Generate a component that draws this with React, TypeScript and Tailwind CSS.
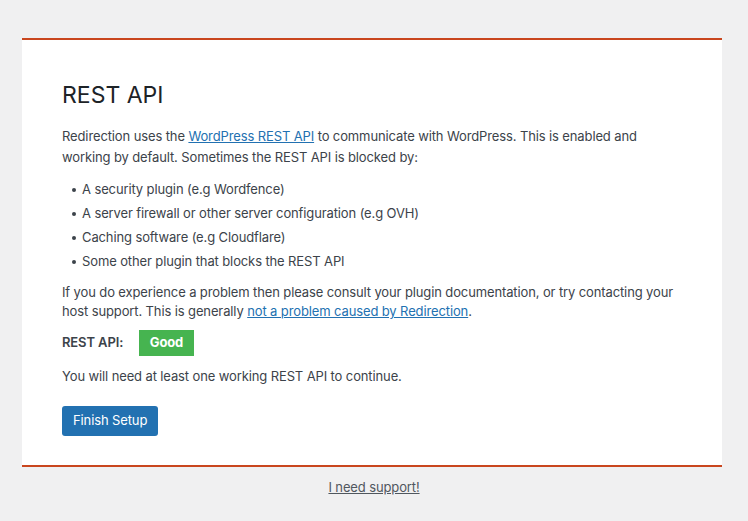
export default function App() {
  return (
    <div
      className="min-h-[521px] bg-[#f0f0f1] pt-[38px] text-[13px] tracking-[-0.12px] text-[#3c434a]"
      style={{ fontFamily: "Inter, 'Liberation Sans', sans-serif" }}
    >
      <div className="mx-[22px] w-[700px] border-t-2 border-b-2 border-[#c9461e] bg-white px-10 pt-[40px] pb-[29px]">
        <h2 className="text-[23px] leading-[30px] tracking-normal text-[#1d2327]">REST API</h2>
        <p className="mt-[16px] leading-[21px]">
          Redirection uses the{" "}
          <a href="#" className="text-[#2271b1] underline">
            WordPress REST API
          </a>{" "}
          to communicate with WordPress. This is enabled and working by default. Sometimes the REST API is blocked by:
        </p>
        <ul className="mt-[12px] ml-[10px] space-y-[5px] leading-[19px]">
          <li className="flex items-center gap-[6px]">
            <span className="h-[4px] w-[4px] rounded-full bg-[#3c434a]" />A security plugin (e.g Wordfence)
          </li>
          <li className="flex items-center gap-[6px]">
            <span className="h-[4px] w-[4px] rounded-full bg-[#3c434a]" />A server firewall or other server configuration (e.g OVH)
          </li>
          <li className="flex items-center gap-[6px]">
            <span className="h-[4px] w-[4px] rounded-full bg-[#3c434a]" />Caching software (e.g Cloudflare)
          </li>
          <li className="flex items-center gap-[6px]">
            <span className="h-[4px] w-[4px] rounded-full bg-[#3c434a]" />Some other plugin that blocks the REST API
          </li>
        </ul>
        <p className="mt-[12px] leading-[19px]">
          If you do experience a problem then please consult your plugin documentation, or try contacting your host
          support. This is generally{" "}
          <a href="#" className="text-[#2271b1] underline">
            not a problem caused by Redirection
          </a>
          .
        </p>
        <div className="mt-[9px] flex items-center">
          <span className="w-[77px] font-semibold">REST API:</span>
          <span className="flex h-[26px] w-[55px] items-center justify-center bg-[#46b450] font-bold text-white">
            Good
          </span>
        </div>
        <p className="mt-[11px] leading-[19px]">You will need at least one working REST API to continue.</p>
        <button className="mt-[20px] h-[30px] rounded-[3px] bg-[#2271b1] px-[11px] text-white">Finish Setup</button>
      </div>
      <div className="mt-[11px] text-center">
        <a href="#" className="text-[#50575e] underline">
          I need support!
        </a>
      </div>
    </div>
  );
}
